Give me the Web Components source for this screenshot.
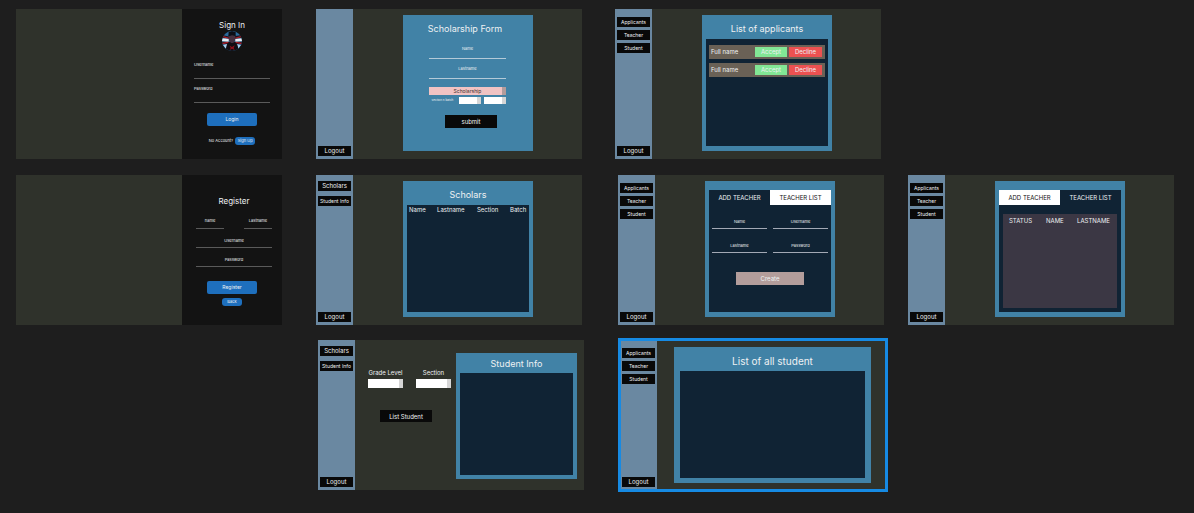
<!DOCTYPE html>
<html lang="en">
<head>
<meta charset="utf-8">
<meta name="viewport" content="width=device-width, initial-scale=1">
<title>Scholarship screens</title>
<style>
  body {
    margin: 0;
    background: #1e1e1e;
    color: #eef1f3;
    font-family: Inter, "Liberation Sans", sans-serif;
    --olive: #2f322b;
    --steel: #6a88a1;
    --blue: #4182a6;
    --navy: #102334;
  }
</style>
</head>
<body>
<design-canvas></design-canvas>

<script>
const BASE = `
  *, *::before, *::after { box-sizing: border-box; }
  button, input, select { font: inherit; color: inherit; margin: 0; padding: 0; border: 0; border-radius: 0; min-width: 0; }
  button { cursor: pointer; white-space: nowrap; }
  form { margin: 0; }
`;

function element(name, css, html) {
  customElements.define(name, class extends HTMLElement {
    connectedCallback() {
      if (this.shadowRoot) return;
      const root = this.attachShadow({ mode: "open" });
      const template = document.createElement("template");
      template.innerHTML = `<style>${BASE}${css}</style>` + (typeof html === "function" ? html(this) : html);
      root.append(template.content.cloneNode(true));
    }
  });
}

/* Underlined text field with its label above the line */
element("line-field", `
  :host { display: block; min-width: 0; }
  label { display: flex; flex-direction: column; font-size: 4px; line-height: 6px; text-align: var(--field-align, center); }
  input { width: 100%; height: var(--field-input, 5px); background: none; outline: 0; border-bottom: 1px solid var(--field-line, #5a5a5a); }
`, el => `<label>${el.getAttribute("label")}<input type="${el.getAttribute("type") || "text"}"></label>`);

/* Drop-down with a shaded strip on its right edge */
element("strip-select", `
  :host { display: block; min-width: 0; }
  label { display: flex; flex-direction: column; align-items: center; gap: 2px; font-size: 6px; line-height: 8px; white-space: nowrap; }
  select {
    appearance: none; display: block; width: 100%; height: var(--select-height, 9px);
    font-size: 5px; line-height: 7px; text-align: center; text-align-last: center; color: #40302f;
    background: linear-gradient(to left, var(--strip, #d6d6d6) var(--strip-width, 4px), var(--fill, #ffffff) var(--strip-width, 4px));
  }
`, el => {
  const option = el.getAttribute("option") || "";
  const select = name => `<select${name ? ` aria-label="${name}"` : ""}><option>${option}</option></select>`;
  const label = el.getAttribute("label");
  return label ? `<label>${label}${select("")}</label>` : select(el.getAttribute("name"));
});

/* Left bar with page buttons and Logout at the foot */
element("side-nav", `
  :host { display: block; flex: 0 0 37px; background: var(--steel); }
  nav { height: 100%; display: flex; flex-direction: column; gap: var(--nav-gap, 3px); padding: var(--nav-top, 8px) 2px 3px; }
  button { height: 10px; background: #090909; font-size: 5px; line-height: 10px; }
  .large { font-size: 6px; }
  .logout { margin-top: auto; }
`, el => `<nav>${(el.getAttribute("items") || "").split(",").filter(Boolean)
    .map(item => `<button type="button"${item === "Scholars" ? ' class="large"' : ""}>${item}</button>`).join("")}
  <button type="button" class="large logout">Logout</button></nav>`);

/* One screen on the canvas */
element("art-board", `
  :host { display: flex; min-width: 0; min-height: 150px; background: var(--olive); }
  :host([selected]) { outline: 3px solid #168ae3; outline-offset: -1px; }
  main { flex: 1; min-width: 0; display: flex; padding: var(--board-pad, 6px 49px 8px 50px); }
`, el => el.hasAttribute("plain") ? `<slot></slot>`
   : `<slot name="nav"></slot><main><slot></slot></main>`);

/* Blue card with an optional heading */
element("blue-card", `
  :host { flex: 1; min-width: 0; display: flex; flex-direction: column; background: var(--blue); padding: var(--card-pad, 8px 4px 5px); }
  h2 { margin: 0 0 var(--heading-gap, 4px); padding-right: var(--heading-inset, 0px); font-size: var(--heading-size, 9px); line-height: 12px; font-weight: 400; text-align: center; white-space: nowrap; }
  .panel { flex: 1; display: flex; flex-direction: column; background: var(--panel, var(--navy)); }
`, el => `${el.hasAttribute("heading") ? `<h2>${el.getAttribute("heading")}</h2>` : ""}<div class="panel"><slot></slot></div>`);

element("auth-panel", `
  :host { display: flex; flex-direction: column; align-items: center; width: 100px; margin-left: auto; background: #131313; padding: var(--auth-pad, 11px 12px 0); }
  h1 { margin: 0; font-size: 8px; line-height: 10px; font-weight: 400; }
`, el => `<h1>${el.getAttribute("heading")}</h1><slot></slot>`);

const BLUE_BUTTONS = `
  .primary { width: 50px; height: 13px; border-radius: 2px; background: #1e6fbd; font-size: 5px; line-height: 13px; }
  .small { width: 20px; height: 8px; border-radius: 3px; background: #1e6fbd; font-size: 4px; line-height: 8px; }
`;

element("user-avatar", `
  :host { display: block; margin-top: 1px; width: 20px; height: 20px; }
  svg { display: block; }
`, `<svg width="20" height="20" viewBox="0 0 60 60" aria-hidden="true">
  <defs><clipPath id="round"><circle cx="30" cy="30" r="30"/></clipPath></defs>
  <g clip-path="url(#round)">
    <rect width="60" height="60" fill="#2b6a9c"/>
    <path d="M0 12 L24 17 L60 12 V21 L38 23 L0 20Z" fill="#15141c"/>
    <path d="M4 15 L22 20 L22 24 L2 19Z M56 15 L38 20 L38 24 L58 19Z" fill="#a51d28"/>
    <path d="M0 22 L20 24 V33 L0 31Z M60 22 L40 24 V33 L60 31Z" fill="#e6eef5"/>
    <path d="M0 32 L22 32 L60 32 V40 L38 40 L0 40Z" fill="#17141c"/>
    <path d="M0 35 L20 32 L18 36 L2 40Z M60 35 L40 32 L42 36 L58 40Z" fill="#b01c28"/>
    <path d="M3 42 L16 39 L12 54Z M57 42 L44 39 L48 54Z" fill="#a9cce8"/>
    <path d="M10 60 L15 40 L24 34 H37 L46 41 L51 60Z" fill="#120d12"/>
    <path d="M20 12 H40 L39 28 L34 36 H27 L21 28Z" fill="#44303f"/>
    <path d="M19 16 L20 3 L30 0 L41 3 L41 16 L37 14 L30 13 L23 15Z" fill="#0c0e16"/>
    <path d="M23 44 L30 48 L38 43 L35 51 L38 57 L30 53 L23 57 L26 51Z" fill="#8f101a"/>
  </g></svg>`);

element("sign-in-form", `
  :host { display: block; width: 100%; --field-align: left; --field-input: 11px; }
  form { display: flex; flex-direction: column; gap: 7px; padding-top: 11px; }
  .primary { align-self: center; margin-top: 3px; }
  p { display: flex; justify-content: center; align-items: center; gap: 2px; margin: 4px 0 0; font-size: 4px; line-height: 8px; white-space: nowrap; }
  ${BLUE_BUTTONS}
`, `<form>
  <line-field label="Username"></line-field>
  <line-field label="Password" type="password"></line-field>
  <button type="button" class="primary">Login</button>
  <p>No Account? <button type="button" class="small">Sign Up</button></p>
</form>`);

element("register-form", `
  :host { display: block; width: 100%; --field-input: 5px; }
  form { display: flex; flex-direction: column; gap: 9px; padding-top: 12px; }
  .pair { display: grid; grid-template-columns: 28px 28px; justify-content: space-between; }
  .wide { --field-input: 4px; }
  .actions { display: flex; flex-direction: column; align-items: center; gap: 4px; margin: 5px 4px 0 0; }
  ${BLUE_BUTTONS}
`, `<form>
  <div class="pair"><line-field label="name"></line-field><line-field label="Lastname"></line-field></div>
  <line-field class="wide" label="Username"></line-field>
  <line-field class="wide" label="Password" type="password"></line-field>
  <div class="actions">
    <button type="button" class="primary">Register</button>
    <button type="button" class="small">Back</button>
  </div>
</form>`);

element("scholarship-form", `
  :host { display: block; --field-input: 7px; --field-line: #b4cad8; }
  form { display: flex; flex-direction: column; padding: 7px 23px 0 22px; }
  line-field + line-field { margin: 7px 0 8px; }
  .kind { --fill: #f1c3c3; --strip: #b39c9c; --select-height: 8px; }
  .group { display: grid; grid-template-columns: 1fr 22px 22px; gap: 3px; align-items: center; margin-top: 2px; --select-height: 7px; font-size: 3px; line-height: 7px; white-space: nowrap; text-align: center; }
  button { align-self: flex-end; width: 52px; height: 13px; margin: 11px 9px 0 0; background: #090909; font-size: 6px; line-height: 12px; }
`, `<form>
  <line-field label="Name"></line-field>
  <line-field label="Lastname"></line-field>
  <strip-select class="kind" name="Scholarship" option="Scholarship"></strip-select>
  <div class="group"><span>section n batch</span>
    <strip-select name="section"></strip-select><strip-select name="batch"></strip-select></div>
  <button type="button">submit</button>
</form>`);

element("applicant-row", `
  :host { display: grid; grid-template-columns: 1fr 32px 33px; gap: 2px; align-items: center; height: 14px; padding: 0 3px 0 2px; background: #6a6156; font-size: 6px; line-height: 10px; white-space: nowrap; }
  button { height: 10px; }
  .accept { background: #82e795; }
  .decline { background: #ec5151; }
`, `<slot></slot><button type="button" class="accept">Accept</button><button type="button" class="decline">Decline</button>`);

element("applicant-list", `
  :host { display: flex; flex-direction: column; gap: 4px; padding: 6px 3px; }
`, `<applicant-row><span>Full name</span></applicant-row><applicant-row><span>Full name</span></applicant-row>`);

element("head-table", `
  :host { display: block; }
  table { width: 100%; table-layout: fixed; border-collapse: collapse; }
  th { padding: 0 0 0 var(--cell-pad, 2px); height: var(--head-height, 9px); font-size: 6px; line-height: 8px; font-weight: 400; text-align: left; white-space: nowrap; }
`, el => {
  const widths = el.getAttribute("widths").split(",");
  return `<table><thead><tr>${el.getAttribute("columns").split(",")
    .map((c, i) => `<th scope="col"${widths[i] ? ` style="width:${widths[i]}px"` : ""}>${c}</th>`).join("")}</tr></thead></table>`;
});

element("teacher-tabs", `
  :host { display: grid; grid-template-columns: 1fr 1fr; }
  button { height: 15px; background: none; font-size: 6px; line-height: 15px; }
  .raised { background: #ffffff; color: #111111; }
`, el => ["ADD TEACHER", "TEACHER LIST"].map((t, i) =>
  `<button type="button"${i === Number(el.getAttribute("raised")) ? ' class="raised"' : ""}>${t}</button>`).join(""));

element("teacher-form", `
  :host { display: block; --field-input: 4px; --field-line: #a3a9b5; }
  form { display: grid; grid-template-columns: 1fr 1fr; gap: 14px 6px; padding: 14px 3px 0; }
  button { grid-column: 1 / -1; justify-self: center; width: 68px; height: 13px; margin-top: 5px; background: #b39d9b; font-size: 6px; line-height: 14px; }
`, `<form>
  <line-field label="Name"></line-field><line-field label="Username"></line-field>
  <line-field label="Lastname"></line-field><line-field label="Password" type="password"></line-field>
  <button type="button">Create</button>
</form>`);

element("teacher-list", `
  :host { flex: 1; display: block; margin: 9px 4px 4px; background: #3b3744; --cell-pad: 6px; --head-height: 13px; }
`, `<head-table columns="STATUS,NAME,LASTNAME" widths="37,31,"></head-table>`);

element("student-filter", `
  :host { display: block; flex: 0 0 83px; margin-right: 5px; }
  form { display: grid; grid-template-columns: 35px 35px; justify-content: space-between; padding-top: 16px; }
  button { grid-column: 1 / -1; width: 52px; height: 12px; margin: 22px 0 0 12px; background: #090909; font-size: 6px; line-height: 11px; }
`, `<form>
  <strip-select label="Grade Level"></strip-select>
  <strip-select label="Section"></strip-select>
  <button type="button">List Student</button>
</form>`);

const ADMIN = `<side-nav slot="nav" items="Applicants,Teacher,Student"></side-nav>`;
const SCHOLAR = `<side-nav slot="nav" class="scholar" items="Scholars,Student Info"></side-nav>`;

element("design-canvas", `
  :host { display: block; min-height: 100vh; padding-bottom: 8px; }
  .row { display: grid; grid-auto-flow: column; padding: 0 20px 0 16px; }
  .first { grid-template-columns: 1fr 34px 1fr 33px 1fr 27px 1fr; margin-top: 9px; }
  .second { grid-template-columns: 1fr 34px 1fr 36px 1fr 24px 1fr; margin-top: 16px; }
  .third { grid-template-columns: 1fr 36px 1fr 36px 1fr 22px 1fr; margin-top: 15px; }
  .c1 { grid-column: 1; } .c2 { grid-column: 3; } .c3 { grid-column: 5; } .c4 { grid-column: 7; }
  .register { --auth-pad: 21px 10px 0 14px; }
  .scholar { --nav-top: 6px; --nav-gap: 5px; }
  .open { --panel: none; --heading-inset: 6px; }
  .tabs { --card-pad: 9px 4px 5px; }
  .info { --board-pad: 13px 7px 11px 13px; --card-pad: 5px 4px 4px; --heading-gap: 3px; }
  .all { --board-pad: 7px 15px 7px 17px; --card-pad: 8px 6px 5px; --heading-size: 10px; }
`, `
<div class="row first">
  <art-board plain class="c1"><auth-panel heading="Sign In"><user-avatar></user-avatar><sign-in-form></sign-in-form></auth-panel></art-board>
  <art-board class="c2"><side-nav slot="nav"></side-nav>
    <blue-card class="open" heading="Scholarship Form"><scholarship-form></scholarship-form></blue-card></art-board>
  <art-board class="c3">${ADMIN}
    <blue-card heading="List of applicants"><applicant-list></applicant-list></blue-card></art-board>
</div>
<div class="row second">
  <art-board plain class="c1"><auth-panel class="register" heading="Register"><register-form></register-form></auth-panel></art-board>
  <art-board class="c2">${SCHOLAR}
    <blue-card heading="Scholars"><head-table columns="Name,Lastname,Section,Batch" widths="28,40,33,"></head-table></blue-card></art-board>
  <art-board class="c3">${ADMIN}
    <blue-card class="tabs"><teacher-tabs raised="1"></teacher-tabs><teacher-form></teacher-form></blue-card></art-board>
  <art-board class="c4">${ADMIN}
    <blue-card class="tabs"><teacher-tabs raised="0"></teacher-tabs><teacher-list></teacher-list></blue-card></art-board>
</div>
<div class="row third">
  <art-board class="c2 info">${SCHOLAR}
    <student-filter></student-filter><blue-card heading="Student Info"></blue-card></art-board>
  <art-board selected class="c3 all">${ADMIN}
    <blue-card heading="List of all student"></blue-card></art-board>
</div>`);
</script>
</body>
</html>
